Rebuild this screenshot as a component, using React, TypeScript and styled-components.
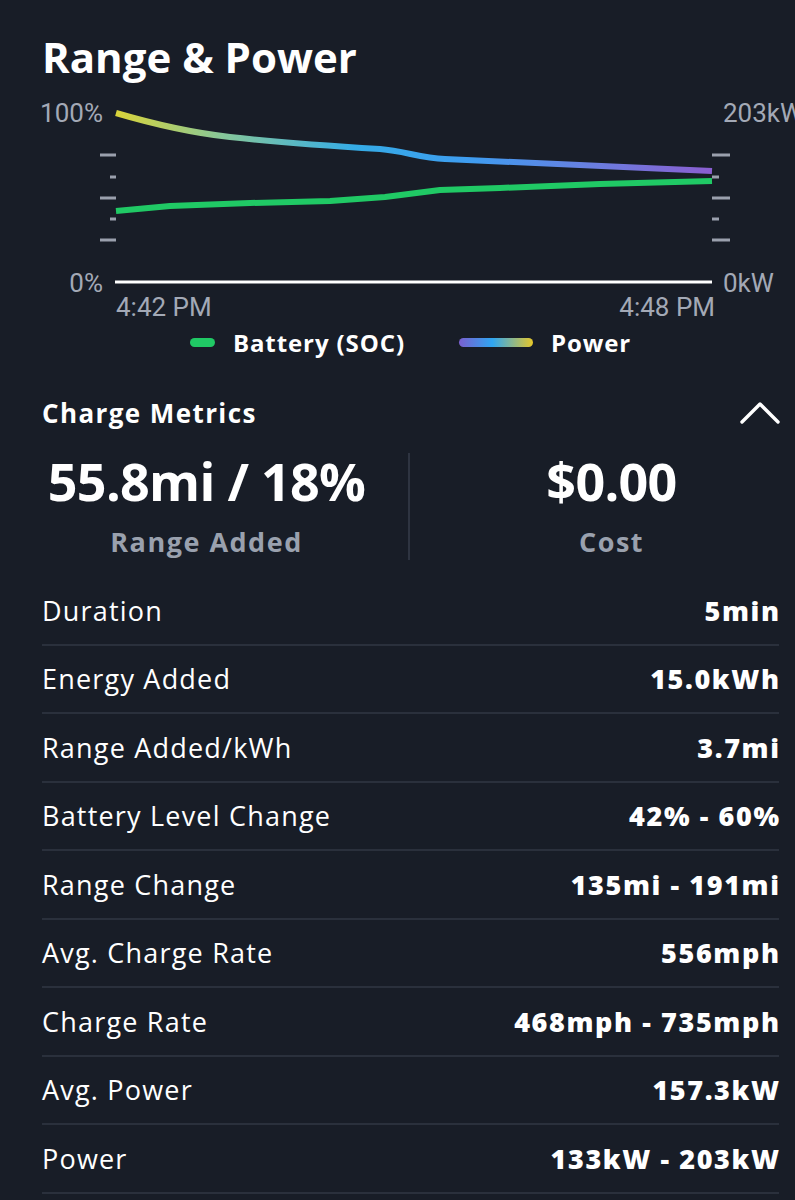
import React from "react";
import styled, { createGlobalStyle } from "styled-components";

const Global = createGlobalStyle`
  html, body { margin: 0; padding: 0; background: #181d27; }
  body { overflow-x: hidden; font-family: "Open Sans", "Noto Sans", sans-serif; color: #ffffff; }
`;

const Page = styled.div`
  width: 795px;
  min-height: 1200px;
  background: #181d27;
  box-sizing: border-box;
  padding: 29px 16px 0 42px;
`;

const Title = styled.h1`
  margin: 0;
  font-size: 42px;
  line-height: 56px;
  font-weight: 700;
`;

const ChartWrap = styled.div`
  margin: 5px -16px 0 -42px;
  height: 232px;
`;

const Legend = styled.div`
  display: flex;
  justify-content: center;
  align-items: center;
  gap: 54px;
  height: 30px;
  margin-top: 5px;
`;

const LegendItem = styled.div`
  display: flex;
  align-items: center;
  gap: 18px;
  font-size: 24px;
  font-weight: 700;
  letter-spacing: 0.9px;
`;

const Swatch = styled.span<{ $w: number; $bg: string }>`
  display: block;
  width: ${(p) => p.$w}px;
  height: 9px;
  border-radius: 5px;
  background: ${(p) => p.$bg};
`;

const MetricsHeader = styled.div`
  display: flex;
  justify-content: space-between;
  align-items: center;
  margin-top: 41px;
  height: 30px;
`;

const SectionTitle = styled.h2`
  margin: 0;
  font-size: 26px;
  font-weight: 700;
  letter-spacing: 1.4px;
`;

const Stats = styled.div`
  display: grid;
  grid-template-columns: 1fr 2px 1fr;
  margin: 25px -34px 0 -37px;
  height: 107px;
`;

const Stat = styled.div`
  display: flex;
  flex-direction: column;
  align-items: center;
`;

const StatValue = styled.div`
  font-size: 52px;
  line-height: 56px;
  font-weight: 700;
  letter-spacing: -0.7px;
  margin-top: 0;
`;

const StatLabel = styled.div`
  font-size: 27px;
  line-height: 36px;
  font-weight: 700;
  color: #9aa1ae;
  letter-spacing: 1.5px;
  margin-top: 15px;
`;

const VDivider = styled.div`
  background: #2e3441;
  width: 2px;
`;

const List = styled.div`
  margin-top: 17px;
`;

const Row = styled.div`
  display: flex;
  justify-content: space-between;
  align-items: center;
  height: 66.5px;
  border-bottom: 2px solid #2a303c;
  font-size: 27px;
`;

const RowLabel = styled.span`
  font-weight: 400;
  letter-spacing: 1.2px;
`;

const RowValue = styled.span`
  font-weight: 800;
  letter-spacing: 1.6px;
  margin-right: -1.6px;
`;

const Chevron = () => (
  <svg width="40" height="24" viewBox="0 0 40 24" style={{ marginRight: -1 }}>
    <polyline
      points="2,21 20,3 38,21"
      fill="none"
      stroke="#ffffff"
      strokeWidth="3.4"
      strokeLinecap="round"
      strokeLinejoin="round"
    />
  </svg>
);

const AXIS = "#a3a9b6";
const TICK = "#9aa0ad";

const Chart = () => {
  const oy = 90;
  const Y = (y: number) => y - oy;
  const ticks = [
    { y: 155, long: true },
    { y: 177, long: false },
    { y: 198, long: true },
    { y: 219, long: false },
    { y: 240, long: true },
  ];
  const battery = [
    [116, 211],
    [170, 206],
    [250, 203],
    [330, 201],
    [385, 197],
    [440, 190],
    [500, 188],
    [600, 184],
    [712, 181],
  ]
    .map(([x, y], i) => `${i ? "L" : "M"}${x},${Y(y)}`)
    .join(" ");
  const power = `M116,${Y(113)} C150,${Y(123)} 185,${Y(132)} 230,${Y(137)} S330,${Y(146)} 380,${Y(149)} C405,${Y(151)} 420,${Y(158)} 445,${Y(159)} S600,${Y(166)} 712,${Y(171)}`;
  const textStyle = { fontFamily: "Roboto, sans-serif", fontSize: 26, fill: AXIS } as const;
  return (
    <svg width="795" height="232" viewBox="0 0 795 232" style={{ display: "block" }}>
      <defs>
        <linearGradient id="pg" gradientUnits="userSpaceOnUse" x1="116" y1="0" x2="712" y2="0">
          <stop offset="0" stopColor="#d9d33a" />
          <stop offset="0.18" stopColor="#86c79a" />
          <stop offset="0.4" stopColor="#35ace6" />
          <stop offset="0.6" stopColor="#3f9cf0" />
          <stop offset="0.8" stopColor="#6a7ee0" />
          <stop offset="1" stopColor="#8a5ed0" />
        </linearGradient>
      </defs>
      {ticks.map((t) => (
        <rect key={"l" + t.y} x={t.long ? 100 : 110} y={Y(t.y) - 1.5} width={t.long ? 16 : 6} height="3" fill={TICK} />
      ))}
      {ticks.map((t) => (
        <rect key={"r" + t.y} x={712} y={Y(t.y) - 1.5} width={t.long ? 18 : 7} height="3" fill={TICK} />
      ))}
      <line x1="115" y1={Y(282)} x2="712" y2={Y(282)} stroke="#ffffff" strokeWidth="3" />
      <path d={power} fill="none" stroke="url(#pg)" strokeWidth="6" />
      <path d={battery} fill="none" stroke="#20c965" strokeWidth="6" strokeLinejoin="round" />
      <text x="103" y={Y(113)} textAnchor="end" dominantBaseline="central" style={textStyle}>100%</text>
      <text x="103" y={Y(283)} textAnchor="end" dominantBaseline="central" style={textStyle}>0%</text>
      <text x="723" y={Y(113)} dominantBaseline="central" style={textStyle}>203kW</text>
      <text x="723" y={Y(283)} dominantBaseline="central" style={textStyle}>0kW</text>
      <text x="116" y={Y(307)} dominantBaseline="central" style={textStyle}>4:42 PM</text>
      <text x="715" y={Y(307)} textAnchor="end" dominantBaseline="central" style={textStyle}>4:48 PM</text>
    </svg>
  );
};

const rows: [string, string][] = [
  ["Duration", "5min"],
  ["Energy Added", "15.0kWh"],
  ["Range Added/kWh", "3.7mi"],
  ["Battery Level Change", "42% - 60%"],
  ["Range Change", "135mi - 191mi"],
  ["Avg. Charge Rate", "556mph"],
  ["Charge Rate", "468mph - 735mph"],
  ["Avg. Power", "157.3kW"],
  ["Power", "133kW - 203kW"],
];

export default function App() {
  return (
    <>
      <Global />
      <Page>
        <Title>Range &amp; Power</Title>
        <ChartWrap>
          <Chart />
        </ChartWrap>
        <Legend>
          <LegendItem>
            <Swatch $w={25} $bg="#20c965" />
            Battery (SOC)
          </LegendItem>
          <LegendItem>
            <Swatch $w={74} $bg="linear-gradient(90deg, #7a5fd0 0%, #2fa6f2 45%, #e6c72a 100%)" />
            Power
          </LegendItem>
        </Legend>
        <MetricsHeader>
          <SectionTitle>Charge Metrics</SectionTitle>
          <Chevron />
        </MetricsHeader>
        <Stats>
          <Stat>
            <StatValue>55.8mi / 18%</StatValue>
            <StatLabel>Range Added</StatLabel>
          </Stat>
          <VDivider />
          <Stat>
            <StatValue>$0.00</StatValue>
            <StatLabel>Cost</StatLabel>
          </Stat>
        </Stats>
        <List>
          {rows.map(([k, v]) => (
            <Row key={k}>
              <RowLabel>{k}</RowLabel>
              <RowValue>{v}</RowValue>
            </Row>
          ))}
        </List>
      </Page>
    </>
  );
}
